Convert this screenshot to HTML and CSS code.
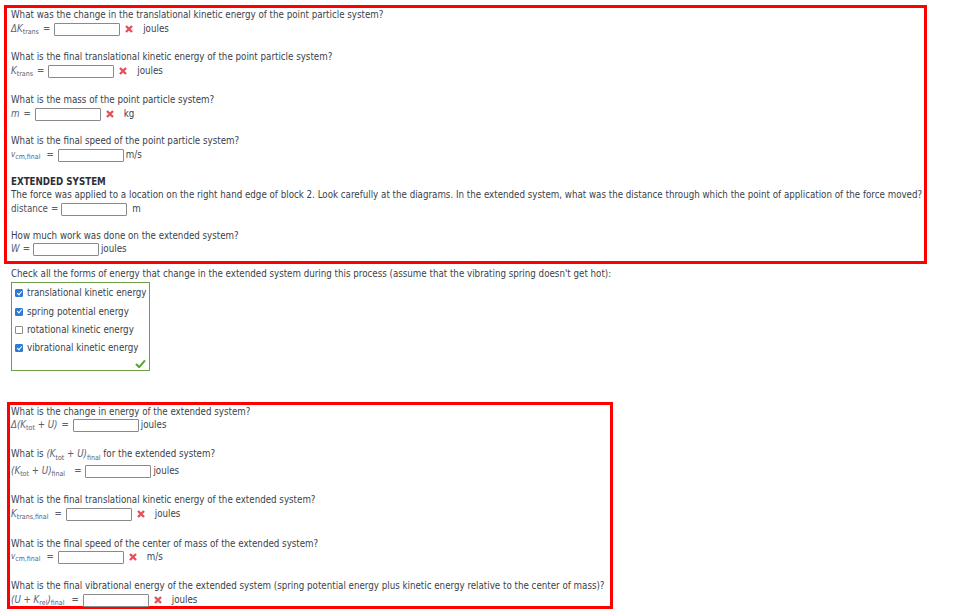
FILE: index.html
```html
<!DOCTYPE html>
<html>
<head>
<meta charset="utf-8">
<link rel="stylesheet" href="styles.css">
</head>
<body>
<div class="page">
  <div class="box box1">
    <div class="q g14">
      <div class="qt">What was the change in the translational kinetic energy of the point particle system?</div>
      <div class="ans"><span class="m">ΔK<sub>trans</sub></span><span class="eq">=</span><span class="inp"></span><span class="x"><svg viewBox="0 0 10 10"><path d="M2 2L8 8M8 2L2 8"/></svg></span><span class="unit">joules</span></div>
    </div>
    <div class="q g15">
      <div class="qt">What is the final translational kinetic energy of the point particle system?</div>
      <div class="ans"><span class="m">K<sub>trans</sub></span><span class="eq">=</span><span class="inp"></span><span class="x"><svg viewBox="0 0 10 10"><path d="M2 2L8 8M8 2L2 8"/></svg></span><span class="unit">joules</span></div>
    </div>
    <div class="q g13">
      <div class="qt">What is the mass of the point particle system?</div>
      <div class="ans"><span class="m">m</span><span class="eq">=</span><span class="inp"></span><span class="x"><svg viewBox="0 0 10 10"><path d="M2 2L8 8M8 2L2 8"/></svg></span><span class="unit">kg</span></div>
    </div>
    <div class="q g13">
      <div class="qt">What is the final speed of the point particle system?</div>
      <div class="ans"><span class="m small">v<sub>cm,final</sub></span><span class="eq wide">=</span><span class="inp"></span><span class="unit tight">m/s</span></div>
    </div>
    <div class="q g13">
      <div class="qt h13 head">EXTENDED SYSTEM</div>
      <div class="qt">The force was applied to a location on the right hand edge of block 2. Look carefully at the diagrams. In the extended system, what was the distance through which the point of application of the force moved?</div>
      <div class="ans"><span class="plain">distance</span><span class="eq narrow">=</span><span class="inp"></span><span class="unit tight2">m</span></div>
    </div>
    <div class="q last">
      <div class="qt h13">How much work was done on the extended system?</div>
      <div class="ans"><span class="m">W</span><span class="eq narrow">=</span><span class="inp"></span><span class="unit tight">joules</span></div>
    </div>
  </div>

  <div class="intro">Check all the forms of energy that change in the extended system during this process (assume that the vibrating spring doesn't get hot):</div>
  <div class="checks">
    <div class="opt"><span class="cb on"></span>translational kinetic energy</div>
    <div class="opt"><span class="cb on"></span>spring potential energy</div>
    <div class="opt"><span class="cb"></span>rotational kinetic energy</div>
    <div class="opt"><span class="cb on"></span>vibrational kinetic energy</div>
    <div class="ok"><svg viewBox="0 0 12 10"><path d="M1 5.5L4.5 9L11 1.5"/></svg></div>
  </div>

  <div class="box box2">
    <div class="q g15">
      <div class="qt h13">What is the change in energy of the extended system?</div>
      <div class="ans"><span class="m">Δ(K<sub>tot</sub> + U)</span><span class="eq">=</span><span class="inp"></span><span class="unit tight">joules</span></div>
    </div>
    <div class="q g15">
      <div class="qt h17">What is <span class="m">(K<sub>tot</sub> + U)<sub>final</sub></span> for the extended system?</div>
      <div class="ans"><span class="m">(K<sub>tot</sub> + U)<sub>final</sub></span><span class="eq wide2">=</span><span class="inp"></span><span class="unit tight">joules</span></div>
    </div>
    <div class="q g16">
      <div class="qt">What is the final translational kinetic energy of the extended system?</div>
      <div class="ans"><span class="m">K<sub>trans,final</sub></span><span class="eq wide">=</span><span class="inp"></span><span class="x"><svg viewBox="0 0 10 10"><path d="M2 2L8 8M8 2L2 8"/></svg></span><span class="unit">joules</span></div>
    </div>
    <div class="q g15">
      <div class="qt h13">What is the final speed of the center of mass of the extended system?</div>
      <div class="ans"><span class="m small">v<sub>cm,final</sub></span><span class="eq wide">=</span><span class="inp"></span><span class="x"><svg viewBox="0 0 10 10"><path d="M2 2L8 8M8 2L2 8"/></svg></span><span class="unit">m/s</span></div>
    </div>
    <div class="q last">
      <div class="qt">What is the final vibrational energy of the extended system (spring potential energy plus kinetic energy relative to the center of mass)?</div>
      <div class="ans"><span class="m">(U + K<sub>rel</sub>)<sub>final</sub></span><span class="eq wide3">=</span><span class="inp"></span><span class="x"><svg viewBox="0 0 10 10"><path d="M2 2L8 8M8 2L2 8"/></svg></span><span class="unit">joules</span></div>
    </div>
  </div>
  <div class="footbar"></div>
</div>
</body>
</html>
```

FILE: styles.css
```css
html, body {
  margin: 0;
  padding: 0;
  background: #fff;
}
body {
  font-family: "DejaVu Sans Condensed", "DejaVu Sans", sans-serif;
  font-stretch: condensed;
  font-size: 9.7px;
  color: #3a3f4a;
  line-height: 14px;
}
.page {
  padding-top: 5px;
  width: 955px;
  height: 614px;
  overflow: hidden;
  position: relative;
}
.box {
  border: 3px solid #ff0000;
  box-sizing: border-box;
}
.box1 {
  margin-left: 4px;
  width: 923px;
  height: 259px;
  padding: 0 0 0 4px;
}
.box2 {
  margin-top: 31px;
  margin-left: 7px;
  width: 606px;
  height: 207px;
  padding: 0 0 0 1px;
}
.g13 { margin-bottom: 13px; }
.g14 { margin-bottom: 14px; }
.g15 { margin-bottom: 15px; }
.g16 { margin-bottom: 16px; }
.q.last {
  margin-bottom: 0;
}
.qt {
  height: 14px;
  white-space: nowrap;
}
.qt.h13 {
  height: 13px;
}
.qt.h17 {
  height: 17px;
}
.head {
  font-weight: bold;
  color: #2b2f38;
}
.ans {
  display: flex;
  align-items: center;
  height: 14px;
  white-space: nowrap;
}
.m {
  font-style: italic;
  color: #5a6070;
}
.m.small {
  font-size: 8px;
}
.plain {
  color: #4a505c;
}
sub {
  font-size: 7px;
  font-style: normal;
  vertical-align: -2px;
  line-height: 0;
}
.qt sub {
  vertical-align: -3px;
}
.eq {
  margin: 0 4px 0 4px;
  color: #5a6070;
}
.eq.narrow {
  margin: 0 3px 0 3px;
}
.eq.wide {
  margin-left: 6px;
}
.eq.wide2 {
  margin-left: 9px;
}
.eq.wide3 {
  margin-left: 7px;
}
.inp {
  display: inline-block;
  width: 64px;
  height: 11px;
  border: 1px solid #8a8a8a;
  border-radius: 1px;
  background: #fff;
}
.x {
  display: inline-flex;
  width: 10px;
  height: 10px;
  margin-left: 4px;
}
.x svg {
  width: 10px;
  height: 10px;
}
.x path {
  stroke: #e4505c;
  stroke-width: 2.4;
  fill: none;
}
.unit {
  margin-left: 9px;
}
.unit.tight {
  margin-left: 2px;
}
.unit.tight2 {
  margin-left: 5px;
}
.intro {
  margin: 3px 0 0 11px;
  height: 14px;
  white-space: nowrap;
}
.checks {
  margin: 1px 0 0 11px;
  width: 139px;
  height: 89px;
  box-sizing: border-box;
  border: 1px solid #6b9e46;
  padding: 1px 0 0 3px;
  position: relative;
}
.opt {
  height: 18.4px;
  display: flex;
  align-items: center;
  white-space: nowrap;
}
.cb {
  display: inline-block;
  width: 6px;
  height: 6px;
  margin-right: 4px;
  border: 1px solid #8a8a8a;
  border-radius: 1px;
  background: #fff;
  position: relative;
}
.cb.on {
  background: #2e7bd6;
  border-color: #2e7bd6;
}
.cb.on::after {
  content: "";
  position: absolute;
  left: 1.5px;
  top: -0.5px;
  width: 2px;
  height: 4px;
  border: solid #fff;
  border-width: 0 1.3px 1.3px 0;
  transform: rotate(40deg);
}
.ok {
  position: absolute;
  right: 3px;
  bottom: 3px;
  width: 11px;
  height: 9px;
}
.ok svg {
  width: 11px;
  height: 9px;
}
.ok path {
  stroke: #5aa83a;
  stroke-width: 2.4;
  fill: none;
}
.footbar {
  position: absolute;
  left: 0;
  bottom: 0;
  width: 110px;
  height: 2px;
  background: #e6e9f0;
}
```
